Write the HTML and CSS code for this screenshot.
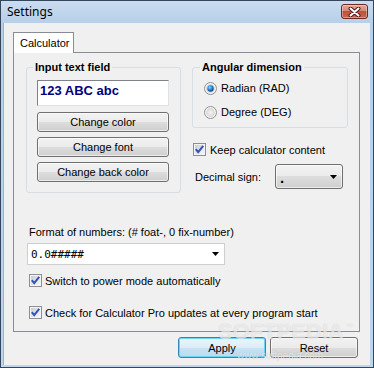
FILE: index.html
```html
<!DOCTYPE html>
<html lang="en">
<head>
    <meta charset="UTF-8">
    <title>Settings</title>
    <link rel="stylesheet" href="styles.css">
</head>
<body>
<div class="window">
    <div class="titlebar">
        <span class="title">Settings</span>
        <button class="close-btn">
            <svg width="13" height="10" viewBox="0 0 13 10">
                <path d="M2.5 1.5 L10.5 8.5 M10.5 1.5 L2.5 8.5" stroke="#4a1c16" stroke-width="4" stroke-linecap="round"/>
                <path d="M2.5 1.5 L10.5 8.5 M10.5 1.5 L2.5 8.5" stroke="#ffffff" stroke-width="2" stroke-linecap="round"/>
            </svg>
        </button>
    </div>

    <div class="client">
        <svg class="defs" width="0" height="0">
            <defs>
                <linearGradient id="boxfill" x1="0" y1="0" x2="1" y2="1">
                    <stop offset="0" stop-color="#cbcfd5"/>
                    <stop offset="1" stop-color="#f6f7f8"/>
                </linearGradient>
                <radialGradient id="radiofill" cx="0.5" cy="0.5" r="0.6">
                    <stop offset="0" stop-color="#f4f4f4"/>
                    <stop offset="1" stop-color="#cfd0d2"/>
                </radialGradient>
                <radialGradient id="radiodot" cx="0.4" cy="0.35" r="0.7">
                    <stop offset="0" stop-color="#9edbff"/>
                    <stop offset="0.45" stop-color="#2a8ad8"/>
                    <stop offset="1" stop-color="#0b3f86"/>
                </radialGradient>
            </defs>
        </svg>

        <div class="tabs">
            <div class="tab active">Calculator</div>
        </div>

        <div class="panel">
            <div class="top-grid">
                <fieldset class="group group-input">
                    <legend>Input text field</legend>
                    <div class="sample">123 ABC abc</div>
                    <button class="btn">Change color</button>
                    <button class="btn">Change font</button>
                    <button class="btn">Change back color</button>
                </fieldset>

                <div class="right-col">
                    <fieldset class="group group-angle">
                        <legend>Angular dimension</legend>
                        <label class="option">
                            <svg width="13" height="13" viewBox="0 0 13 13">
                                <circle cx="6.5" cy="6.5" r="6" fill="#f6f6f6" stroke="#8e8f8f"/>
                                <circle cx="6.5" cy="6.5" r="4.4" fill="url(#radiofill)"/>
                                <circle cx="6.5" cy="6.5" r="3.2" fill="url(#radiodot)"/>
                            </svg>
                            Radian (RAD)
                        </label>
                        <label class="option">
                            <svg width="13" height="13" viewBox="0 0 13 13">
                                <circle cx="6.5" cy="6.5" r="6" fill="#f6f6f6" stroke="#8e8f8f"/>
                                <circle cx="6.5" cy="6.5" r="4.4" fill="url(#radiofill)"/>
                            </svg>
                            Degree (DEG)
                        </label>
                    </fieldset>

                    <label class="option check keep">
                        <svg width="13" height="13" viewBox="0 0 13 13">
                            <rect x="0.5" y="0.5" width="12" height="12" fill="#f4f4f4" stroke="#8e8f8f"/>
                            <rect x="2" y="2" width="9" height="9" fill="url(#boxfill)"/>
                            <path d="M2.8 6.2 L5.2 9.2 L10.2 2.8" fill="none" stroke="#3553b0" stroke-width="2"/>
                        </svg>
                        Keep calculator content
                    </label>

                    <div class="decimal-row">
                        <span class="decimal-label">Decimal sign:</span>
                        <div class="dropdown">
                            <span class="dot">.</span>
                            <svg width="7" height="4" viewBox="0 0 7 4"><polygon points="0,0 7,0 3.5,4" fill="#000"/></svg>
                        </div>
                    </div>
                </div>
            </div>

            <div class="format-label">Format of numbers: (# foat-, 0 fix-number)</div>
            <div class="combo">
                <span>0.0#####</span>
                <svg width="7" height="4" viewBox="0 0 7 4"><polygon points="0,0 7,0 3.5,4" fill="#000"/></svg>
            </div>

            <label class="option check power">
                <svg width="13" height="13" viewBox="0 0 13 13">
                    <rect x="0.5" y="0.5" width="12" height="12" fill="#f4f4f4" stroke="#8e8f8f"/>
                    <rect x="2" y="2" width="9" height="9" fill="url(#boxfill)"/>
                    <path d="M2.8 6.2 L5.2 9.2 L10.2 2.8" fill="none" stroke="#3553b0" stroke-width="2"/>
                </svg>
                Switch to power mode automatically
            </label>
            <label class="option check updates">
                <svg width="13" height="13" viewBox="0 0 13 13">
                    <rect x="0.5" y="0.5" width="12" height="12" fill="#f4f4f4" stroke="#8e8f8f"/>
                    <rect x="2" y="2" width="9" height="9" fill="url(#boxfill)"/>
                    <path d="M2.8 6.2 L5.2 9.2 L10.2 2.8" fill="none" stroke="#3553b0" stroke-width="2"/>
                </svg>
                Check for Calculator Pro updates at every program start
            </label>
        </div>

        <div class="footer">
            <button class="btn btn-default">Apply</button>
            <button class="btn">Reset</button>
        </div>

        <span class="wm-big">SOFTPEDIA<sup>™</sup></span>
        <span class="wm-small">www.softpedia.com</span>
    </div>
</div>
</body>
</html>
```

FILE: styles.css
```css
body {
    margin: 0;
    width: 374px;
    height: 368px;
    overflow: hidden;
    font-family: 'Liberation Sans', Arial, sans-serif;
    font-size: 11px;
    color: #000;
}

.window {
    width: 374px;
    height: 368px;
    box-sizing: border-box;
    border: 1px solid #33465c;
    padding: 0 3px 2px 3px;
    background: linear-gradient(#cadcf0, #b7cfe9 22px, #bfd5ee);
    display: flex;
    flex-direction: column;
}

.titlebar {
    height: 22px;
    display: flex;
    align-items: flex-start;
    justify-content: space-between;
}

.title {
    font-family: 'Noto Sans', 'Liberation Sans', sans-serif;
    font-size: 12px;
    line-height: 22px;
    padding-left: 3px;
    color: #000;
}

.close-btn {
    width: 27px;
    height: 15px;
    margin-top: 3px;
    margin-right: 2px;
    padding: 0;
    border: 1px solid #6a2b24;
    border-radius: 3px;
    background: linear-gradient(#e6a597, #d6897a 45%, #c0503d 50%, #c9664f);
    box-shadow: inset 0 0 0 1px rgba(255, 255, 255, 0.35);
    display: flex;
    align-items: center;
    justify-content: center;
}

.client {
    flex: 1;
    position: relative;
    background: #f0f0f0;
    padding: 9px 10px 0 9px;
    border-left: 1px solid #8fb6de;
    margin-left: -1px;
}

.defs {
    position: absolute;
}

.tabs {
    display: flex;
    height: 21px;
    margin-bottom: -1px;
    position: relative;
    z-index: 1;
}

.tab {
    width: 61px;
    height: 21px;
    box-sizing: border-box;
    border: 1px solid #898c95;
    border-bottom: none;
    background: #fff;
    padding-left: 6px;
    line-height: 20px;
}

.panel {
    height: 280px;
    box-sizing: border-box;
    border: 1px solid #898c95;
    background: #f0f0f0;
    padding: 8px 11px 0 12px;
}

.top-grid {
    display: grid;
    grid-template-columns: 155px 156px;
    column-gap: 11px;
    align-items: start;
}

.group {
    margin: 0;
    min-width: 0;
    border: 1px solid #d5dfe5;
    border-radius: 3px;
}

.group legend {
    font-weight: bold;
    line-height: 13px;
    padding: 0 2px;
    margin-left: -4px;
}

.group-input {
    padding: 6px 11px 10px 10px;
}

.sample {
    height: 26px;
    box-sizing: border-box;
    border: 1px solid;
    border-color: #7f8389 #dfe3e8 #dfe3e8 #7f8389;
    background: #fff;
    padding: 2px 2px;
    font-size: 13px;
    line-height: 15px;
    font-weight: bold;
    color: #000080;
}

.btn {
    display: block;
    height: 20px;
    padding: 0;
    border: 1px solid #707070;
    border-radius: 3px;
    background: linear-gradient(#f2f2f2, #ebebeb 50%, #dddddd 50%, #cfcfcf);
    box-shadow: inset 0 0 0 1px rgba(255, 255, 255, 0.6);
    font-family: 'Liberation Sans', Arial, sans-serif;
    font-size: 11px;
    color: #000;
}

.group-input .btn {
    width: 100%;
    margin-top: 5px;
}

.group-input .sample + .btn {
    margin-top: 6px;
}

.group-angle {
    padding: 4px 8px 5px 11px;
}

.option {
    display: flex;
    align-items: center;
    gap: 4px;
    height: 20px;
    white-space: nowrap;
}

.group-angle .option + .option {
    margin-top: 4px;
}

.check {
    height: 13px;
    gap: 3px;
}

.keep {
    margin-top: 15px;
    margin-left: 1px;
    gap: 4px;
}

.decimal-row {
    display: flex;
    align-items: center;
    margin-top: 8px;
    height: 25px;
}

.decimal-label {
    width: 80px;
    padding-left: 3px;
}

.dropdown {
    width: 68px;
    height: 25px;
    box-sizing: border-box;
    border: 1px solid #707070;
    border-radius: 3px;
    background: linear-gradient(#f2f2f2, #ebebeb 50%, #dddddd 50%, #cfcfcf);
    box-shadow: inset 0 0 0 1px rgba(255, 255, 255, 0.6);
    display: flex;
    align-items: center;
    justify-content: space-between;
    padding: 0 5px 0 4px;
}

.dot {
    font-size: 15px;
    font-weight: bold;
    line-height: 15px;
    margin-top: 1px;
}

.format-label {
    margin-top: 33px;
    padding-left: 3px;
    line-height: 13px;
}

.combo {
    margin-top: 4px;
    margin-left: 1px;
    width: 198px;
    height: 22px;
    box-sizing: border-box;
    border: 1px solid #cfcfcf;
    background: #fff;
    display: flex;
    align-items: center;
    justify-content: space-between;
    padding: 0 5px 0 3px;
    font-family: 'DejaVu Sans Mono', 'Liberation Mono', monospace;
    font-size: 11px;
}

.power {
    margin-top: 9px;
    margin-left: 3px;
}

.updates {
    margin-top: 19px;
    margin-left: 3px;
}

.footer {
    display: flex;
    justify-content: flex-end;
    gap: 4px;
    margin-top: 5px;
    padding-right: 2px;
}

.footer .btn {
    width: 88px;
    height: 21px;
}

.btn-default {
    border-color: #3585b8;
    background: linear-gradient(#eaf5fb, #dcedf7 50%, #c8e3f2 50%, #b9dbee);
    box-shadow: inset 0 0 0 1px #6fd3f5;
}

/* watermark over the dialog */
.wm-big {
    position: absolute;
    left: 214px;
    top: 293px;
    font-size: 22px;
    line-height: 22px;
    font-weight: bold;
    color: rgba(255, 255, 255, 0.6);
    text-shadow: 0 0 1px rgba(110, 110, 110, 0.3);
    pointer-events: none;
    white-space: nowrap;
}

.wm-big sup {
    font-size: 7px;
    vertical-align: 10px;
    margin-left: 2px;
}

.wm-small {
    position: absolute;
    left: 233px;
    top: 327px;
    font-size: 10px;
    line-height: 12px;
    color: rgba(255, 255, 255, 0.65);
    text-shadow: 0 0 1px rgba(110, 110, 110, 0.35);
    pointer-events: none;
    white-space: nowrap;
}
```
